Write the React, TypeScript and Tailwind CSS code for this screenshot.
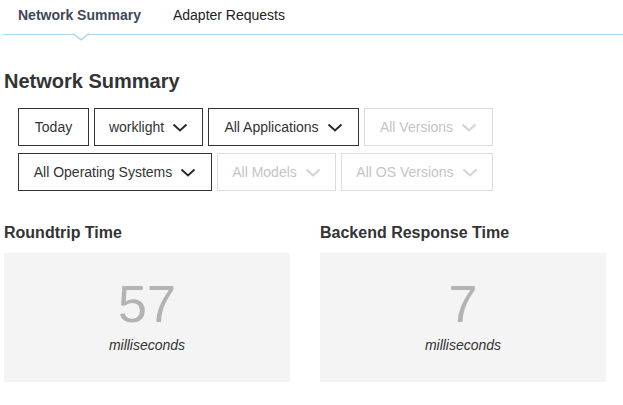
const font = "font-['Liberation_Sans',Arial,sans-serif]";

function Chevron({ disabled }: { disabled?: boolean }) {
  return (
    <svg width="16" height="9" viewBox="0 0 16 9" className="ml-2 shrink-0">
      <path
        d="M1.5 1.5 L8 7.5 L14.5 1.5"
        fill="none"
        stroke={disabled ? "#d2d2d2" : "#2b2b2b"}
        strokeWidth="2"
      />
    </svg>
  );
}

function Filter({
  label,
  width,
  dropdown = true,
  disabled = false,
}: {
  label: string;
  width: string;
  dropdown?: boolean;
  disabled?: boolean;
}) {
  return (
    <div
      className={`flex h-[38px] items-center justify-center border text-[14px] ${width} ${
        disabled ? "border-[#dcdcdc] text-[#c4c4c4]" : "border-[#333] text-[#333]"
      }`}
    >
      <span>{label}</span>
      {dropdown && <Chevron disabled={disabled} />}
    </div>
  );
}

function Metric({ title, value }: { title: string; value: string }) {
  return (
    <div className="w-[286px]">
      <h3 className="text-[16px] leading-[20px] font-bold text-[#333]">{title}</h3>
      <div className="mt-[10px] flex h-[129px] flex-col items-center bg-[#f4f4f4] pt-[25px]">
        <div className="text-[52px] leading-[52px] text-[#b3b3b3]">{value}</div>
        <div className="mt-[5px] text-[14px] leading-[20px] italic text-[#333]">milliseconds</div>
      </div>
    </div>
  );
}

export default function App() {
  return (
    <div className={`${font} w-[623px] h-[405px] bg-white text-[#333]`}>
      {/* tabs */}
      <div className="relative ml-[3px] flex h-[35px] border-b border-[#a6d4f6] text-[14px] leading-[20px]">
        <div className="pl-[15px] pt-[5px] font-bold text-[#3f4858]">Network Summary</div>
        <div className="pl-[32px] pt-[5px] text-[#222]">Adapter Requests</div>
        <svg
          width="16"
          height="8"
          viewBox="0 0 16 8"
          className="absolute left-[70px] top-[33px]"
        >
          <path d="M0 0.5 L8 6.8 L16 0.5" fill="white" stroke="#a6d4f6" strokeWidth="1.3" />
        </svg>
      </div>

      <h2 className="mt-[34px] ml-[4px] text-[20px] leading-[24px] font-bold text-[#333]">
        Network Summary
      </h2>

      <div className="mt-[15px] ml-[18px] flex flex-col gap-[7px]">
        <div className="flex gap-[5px]">
          <Filter label="Today" width="w-[71px]" dropdown={false} />
          <Filter label="worklight" width="w-[109px]" />
          <Filter label="All Applications" width="w-[151px]" />
          <Filter label="All Versions" width="w-[129px]" disabled />
        </div>
        <div className="flex gap-[5px]">
          <Filter label="All Operating Systems" width="w-[194px]" />
          <Filter label="All Models" width="w-[119px]" disabled />
          <Filter label="All OS Versions" width="w-[152px]" disabled />
        </div>
      </div>

      <div className="mt-[32px] ml-[4px] flex gap-[30px]">
        <Metric title="Roundtrip Time" value="57" />
        <Metric title="Backend Response Time" value="7" />
      </div>
    </div>
  );
}
